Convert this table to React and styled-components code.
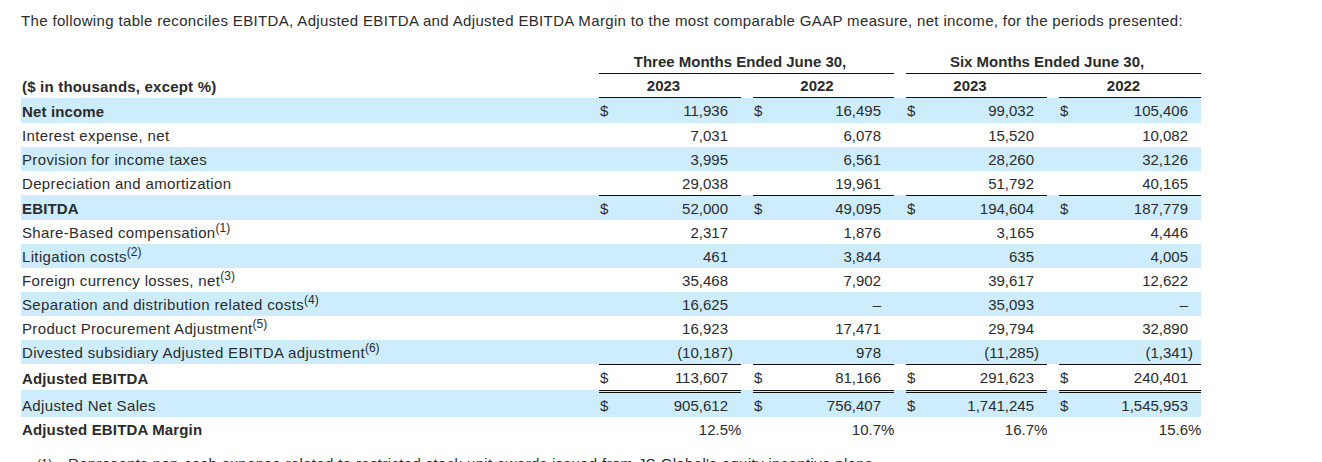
import React from "react";
import styled, { createGlobalStyle } from "styled-components";

const Global = createGlobalStyle`
  html, body { margin: 0; padding: 0; background: #ffffff; }
  body {
    font-family: "Liberation Sans", Arial, sans-serif;
    color: #2b2b2b;
    font-size: 15px;
  }
`;

const Page = styled.div`
  padding: 12px 0 0 21px;
  width: 1301px;
  height: 462px;
  box-sizing: border-box;
  overflow: hidden;
`;

const Intro = styled.p`
  margin: 0;
  line-height: 18px;
  font-size: 15px;
  letter-spacing: 0.35px;
`;

const Table = styled.table`
  margin-top: 20px;
  border-collapse: separate;
  border-spacing: 0;
  table-layout: fixed;
  width: 1180px;
  font-size: 15px;
`;

const HeadCell = styled.th`
  height: 23px;
  padding: 0 13px 0 0;
  font-weight: bold;
  text-align: center;
  vertical-align: middle;
  border-bottom: ${(p) => (p.$line ? "1px solid #111" : "none")};
  white-space: nowrap;
`;

const UnitsCell = styled.th`
  padding: 0 0 0 1px;
  text-align: left;
  font-weight: bold;
  vertical-align: middle;
  white-space: nowrap;
  letter-spacing: 0.2px;
`;

const Row = styled.tr`
  background: ${(p) => (p.$shaded ? "#cdedfd" : "transparent")};
`;

const Label = styled.td`
  height: 24px;
  padding: ${(p) => (p.$padTop ? `${p.$padTop}px 0 0 1px` : "0 0 0 1px")};
  font-weight: ${(p) => (p.$bold ? "bold" : "normal")};
  letter-spacing: ${(p) => (p.$bold ? "0.15px" : "0.35px")};
  white-space: nowrap;
  vertical-align: middle;
  border-top: ${(p) => (p.$topPad ? p.$topPad : "0")} solid transparent;
`;

const Sup = styled.sup`
  font-size: 12px;
  line-height: 0;
  vertical-align: 6px;
  letter-spacing: 0;
`;

const ValueCell = styled.td`
  height: 24px;
  padding: 0;
  vertical-align: middle;
  border-top: ${(p) =>
    p.$top === "double"
      ? "3px double #111"
      : p.$top === "single"
      ? "1px solid #111"
      : "0 solid transparent"};
`;

const ValueInner = styled.div`
  display: flex;
  align-items: center;
  white-space: nowrap;
`;

const Dollar = styled.span`
  width: 12px;
  padding-left: 1px;
  flex: none;
`;

const Num = styled.span`
  flex: 1;
  text-align: right;
`;

const Suffix = styled.span`
  width: 13px;
  flex: none;
  text-align: left;
`;

const Spacer = styled.td`
  padding: 0;
  border-top: ${(p) =>
    p.$top === "double" ? "3px solid transparent" : p.$top === "single" ? "1px solid transparent" : "0"};
`;

const Footnote = styled.div`
  display: flex;
  margin-top: 14px;
  padding-left: 16px;
  font-size: 15px;
  line-height: 18px;
  letter-spacing: 0.35px;
`;

const FootMark = styled.span`
  width: 31px;
  font-size: 12px;
  flex: none;
`;

const rows = [
  { label: "Net income", bold: true, shaded: true, dollar: true, padTop: 1, v: ["11,936", "16,495", "99,032", "105,406"] },
  { label: "Interest expense, net", v: ["7,031", "6,078", "15,520", "10,082"] },
  { label: "Provision for income taxes", shaded: true, v: ["3,995", "6,561", "28,260", "32,126"] },
  { label: "Depreciation and amortization", v: ["29,038", "19,961", "51,792", "40,165"] },
  { label: "EBITDA", bold: true, shaded: true, dollar: true, top: "single", v: ["52,000", "49,095", "194,604", "187,779"] },
  { label: "Share-Based compensation", sup: "(1)", v: ["2,317", "1,876", "3,165", "4,446"] },
  { label: "Litigation costs", sup: "(2)", shaded: true, v: ["461", "3,844", "635", "4,005"] },
  { label: "Foreign currency losses, net", sup: "(3)", v: ["35,468", "7,902", "39,617", "12,622"] },
  { label: "Separation and distribution related costs", sup: "(4)", shaded: true, v: ["16,625", "–", "35,093", "–"] },
  { label: "Product Procurement Adjustment", sup: "(5)", v: ["16,923", "17,471", "29,794", "32,890"] },
  { label: "Divested subsidiary Adjusted EBITDA adjustment", sup: "(6)", shaded: true, v: ["(10,187", "978", "(11,285", "(1,341"], suf: [")", "", ")", ")"] },
  { label: "Adjusted EBITDA", bold: true, dollar: true, top: "single", padTop: 1, v: ["113,607", "81,166", "291,623", "240,401"] },
  { label: "Adjusted Net Sales", shaded: true, dollar: true, top: "double", v: ["905,612", "756,407", "1,741,245", "1,545,953"] },
  { label: "Adjusted EBITDA Margin", bold: true, v: ["12.5", "10.7", "16.7", "15.6"], suf: ["%", "%", "%", "%"] },
];

function Value({ row, i }) {
  const suffix = row.suf ? row.suf[i] : "";
  return (
    <ValueCell $top={row.top}>
      <ValueInner>
        <Dollar>{row.dollar ? "$" : ""}</Dollar>
        <Num>{row.v[i]}</Num>
        <Suffix>{suffix}</Suffix>
      </ValueInner>
    </ValueCell>
  );
}

export default function App() {
  return (
    <>
      <Global />
      <Page>
        <Intro>
          The following table reconciles EBITDA, Adjusted EBITDA and Adjusted EBITDA Margin to the most comparable
          GAAP measure, net income, for the periods presented:
        </Intro>
        <Table>
          <colgroup>
            <col style={{ width: 578 }} />
            <col style={{ width: 142 }} />
            <col style={{ width: 12 }} />
            <col style={{ width: 141 }} />
            <col style={{ width: 12 }} />
            <col style={{ width: 141 }} />
            <col style={{ width: 12 }} />
            <col style={{ width: 142 }} />
          </colgroup>
          <thead>
            <tr>
              <th />
              <HeadCell colSpan={3} $line>Three Months Ended June 30,</HeadCell>
              <th />
              <HeadCell colSpan={3} $line>Six Months Ended June 30,</HeadCell>
            </tr>
            <tr>
              <UnitsCell>($ in thousands, except %)</UnitsCell>
              <HeadCell $line>2023</HeadCell>
              <th />
              <HeadCell $line>2022</HeadCell>
              <th />
              <HeadCell $line>2023</HeadCell>
              <th />
              <HeadCell $line>2022</HeadCell>
            </tr>
          </thead>
          <tbody>
            {rows.map((row) => (
              <Row key={row.label} $shaded={row.shaded}>
                <Label
                  $bold={row.bold}
                  $padTop={row.padTop}
                  $topPad={row.top === "double" ? "3px" : row.top === "single" ? "1px" : "0"}
                >
                  {row.label}
                  {row.sup && <Sup>{row.sup}</Sup>}
                </Label>
                <Value row={row} i={0} />
                <Spacer $top={row.top} />
                <Value row={row} i={1} />
                <Spacer $top={row.top} />
                <Value row={row} i={2} />
                <Spacer $top={row.top} />
                <Value row={row} i={3} />
              </Row>
            ))}
          </tbody>
        </Table>
        <Footnote>
          <FootMark>(1)</FootMark>
          <span>Represents non-cash expense related to restricted stock unit awards issued from JS Global's equity incentive plans.</span>
        </Footnote>
      </Page>
    </>
  );
}
